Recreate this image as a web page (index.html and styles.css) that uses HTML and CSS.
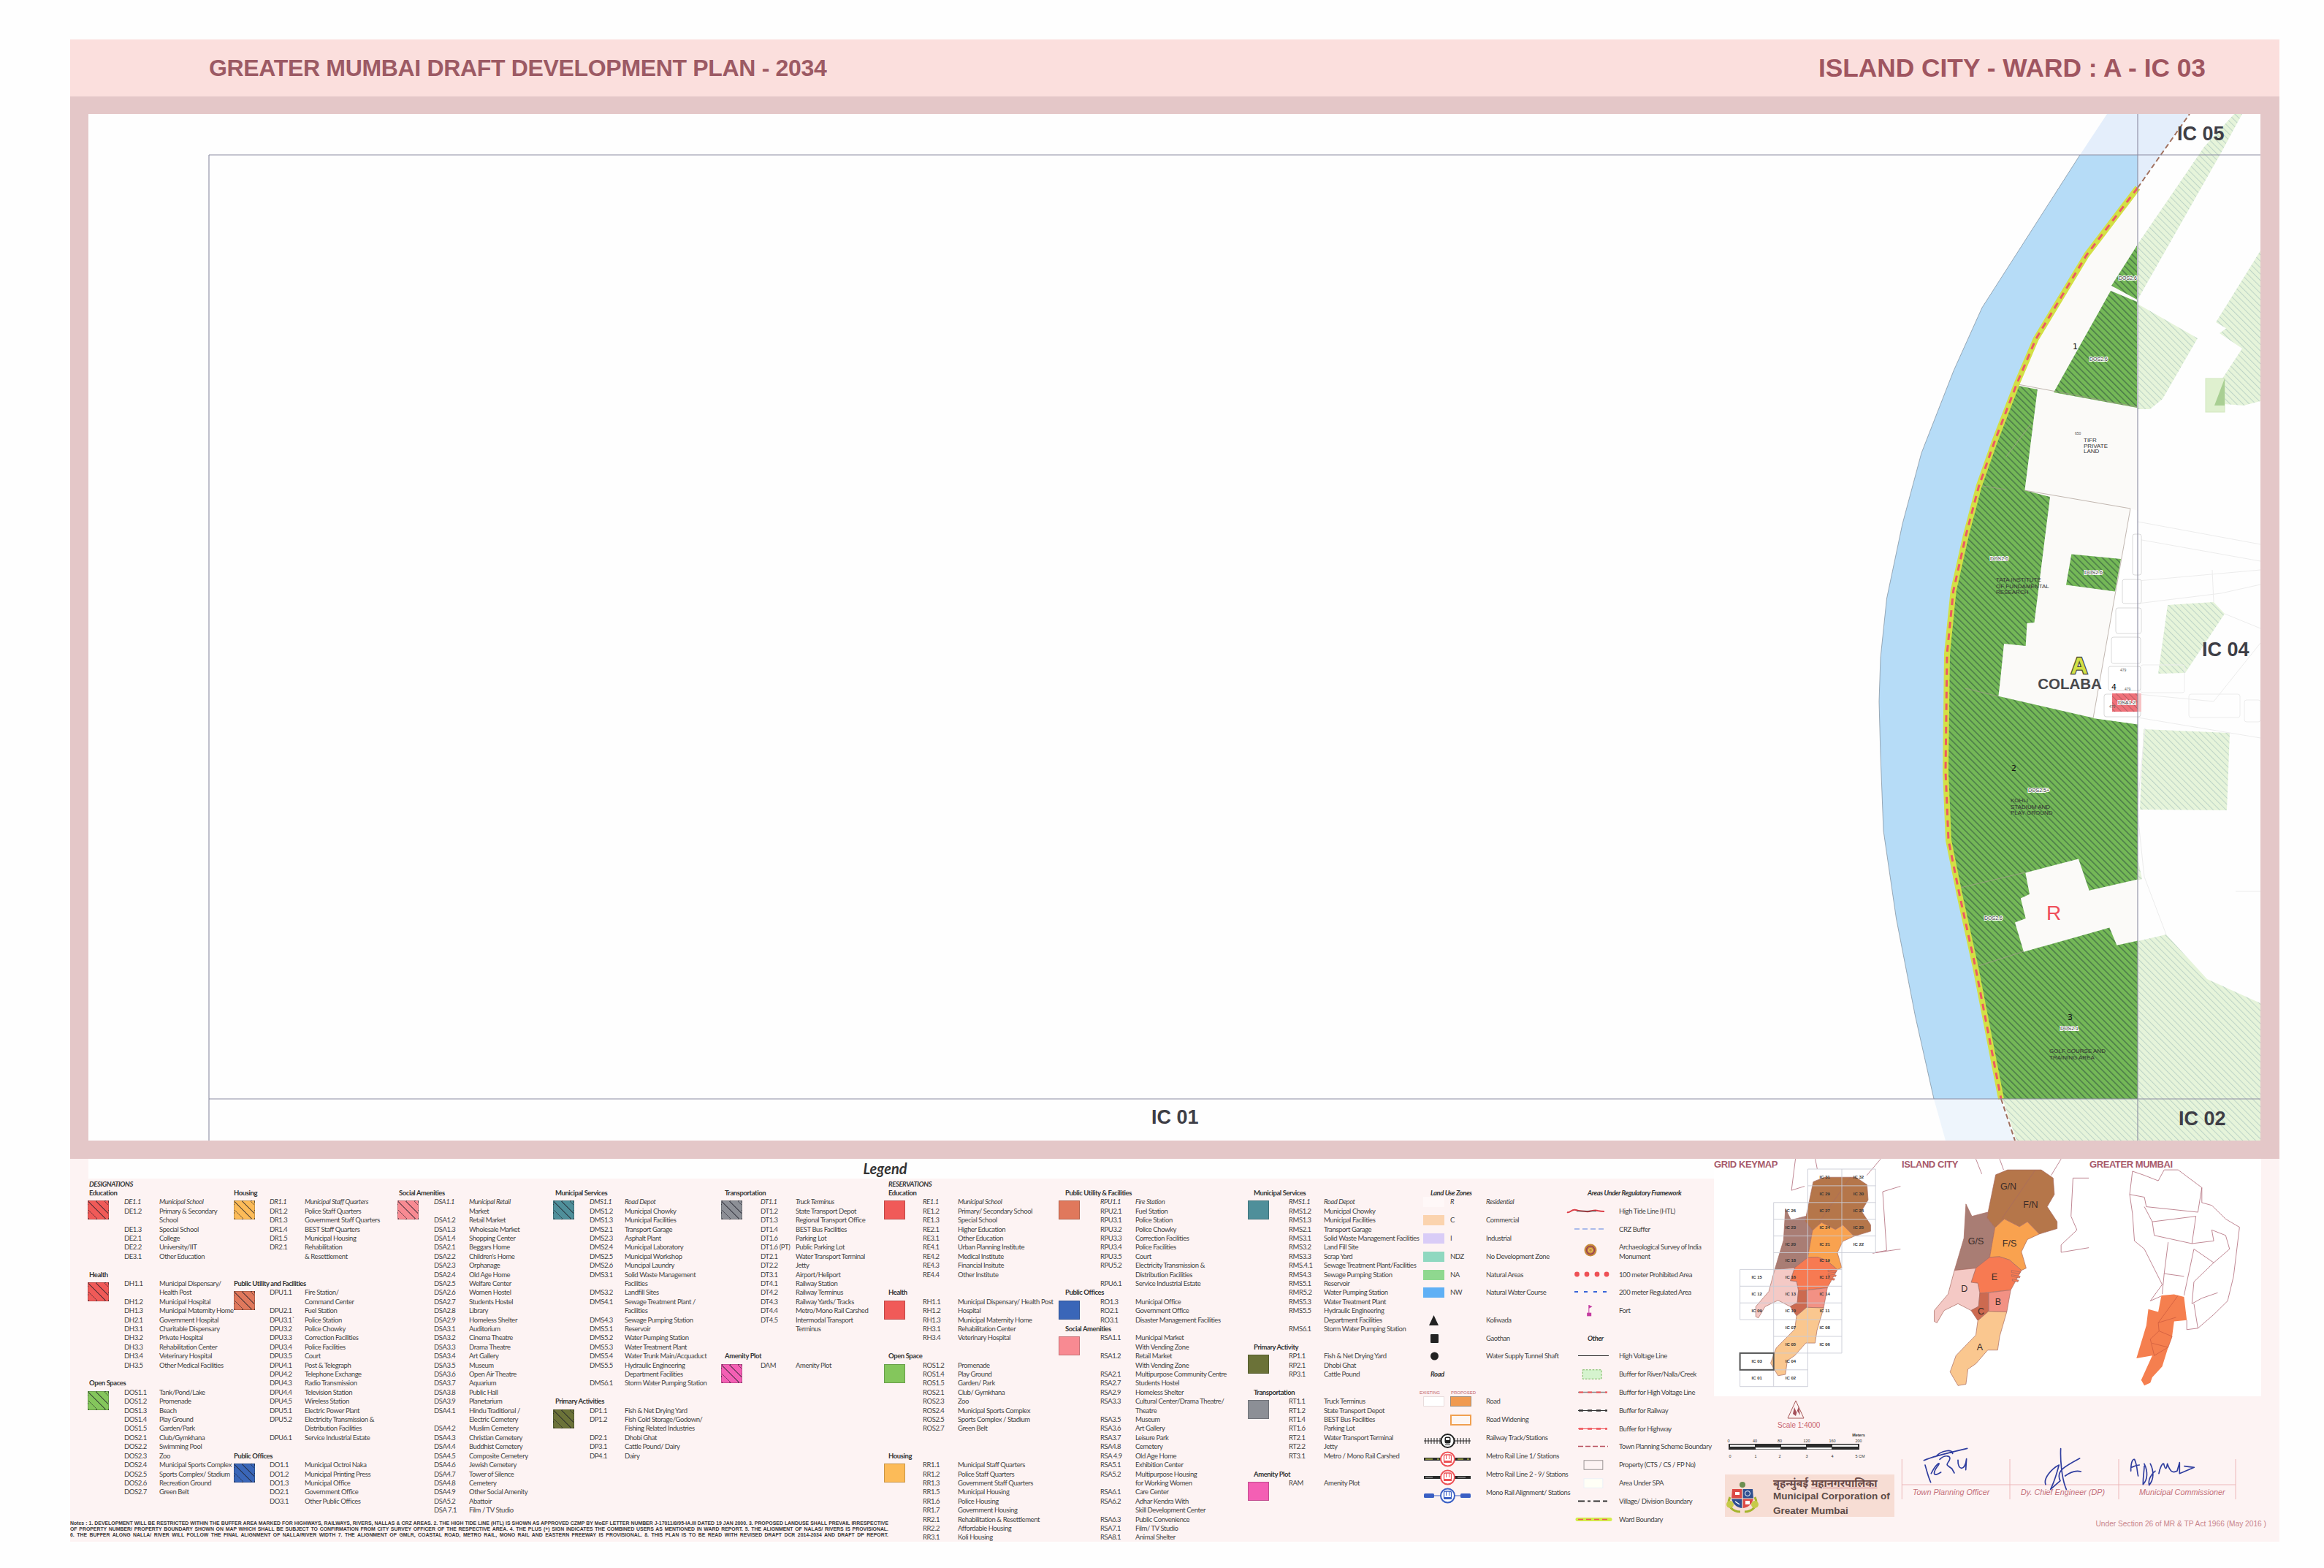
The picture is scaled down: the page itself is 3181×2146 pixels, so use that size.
FILE: index.html
```html
<!DOCTYPE html>
<html lang="en">
<head>
<meta charset="utf-8">
<title>Greater Mumbai Draft Development Plan - 2034</title>
<link rel="stylesheet" href="styles.css">
</head>
<body>
<main class="sheet">
  <header class="head">
    <h1 class="h-left">GREATER MUMBAI DRAFT DEVELOPMENT PLAN - 2034</h1>
    <h2 class="h-right">ISLAND CITY - WARD : A - IC 03</h2>
  </header>

  <section class="frame">
    <svg class="map" viewBox="121 156 2973 1405" width="2973" height="1405">
      <defs>
        <pattern id="hg" width="6.2" height="6.2" patternUnits="userSpaceOnUse" patternTransform="rotate(-45)">
          <rect width="6.2" height="6.2" fill="#74b857"/><rect width="1.5" height="6.2" fill="#4b7a49"/>
        </pattern>
        <pattern id="hp" width="6.2" height="6.2" patternUnits="userSpaceOnUse" patternTransform="rotate(-45)">
          <rect width="6.2" height="6.2" fill="#e6f4da"/><rect width="1" height="6.2" fill="#bcd3c6"/>
        </pattern>
        <pattern id="hr" width="6.2" height="6.2" patternUnits="userSpaceOnUse" patternTransform="rotate(-45)">
          <rect width="6.2" height="6.2" fill="#f0727a"/><rect width="1" height="6.2" fill="#b55c62"/>
        </pattern>
      </defs>
      <rect x="121" y="156" width="2973" height="1405" fill="#fefefe"/>

      <polygon class="pale" points="2884,156 2847,212 2926,212 2926,257 2997,156"/>
      <polygon class="pale2" points="2647,1504 2663,1561 2758,1561 2739,1504"/>
      <path class="water" d="M2847,212 L2926,212 L2926,257 L2856,349 L2786.6,464 L2760.6,525 L2730,604.5 L2708.5,665.7 L2691,732 L2673.7,808.6 L2665,895 L2663,1056 L2667,1150 L2682.4,1226 L2704,1324 L2739,1504 L2647,1504 L2621.6,1391 L2595.5,1257 L2578,1137 L2574,1034 L2572,960 L2574,900 L2582.5,819 L2604,717 L2630,620 L2674,507.5 L2713,421 Z"/>
      <polygon class="land" points="2926,257 2856,349 2786.6,464 2760.6,525 2730,604.5 2708.5,665.7 2691,732 2673.7,808.6 2665,895 2663,1056 2667,1150 2682.4,1226 2704,1324 2739,1504 2926,1504"/>

      <g class="hpale">
        <polygon points="3058,156 3069,156 3038.5,212 2926,410 2926,334 3017,201"/>
        <polygon points="2926,416 3008,463 2960,546 2943,560 2926,560"/>
        <polygon points="3094,343 3033,441 3094,477"/>
        <polygon points="3038,456 3069,477 3032,533 3045,553 3071,555 3094,549 3094,470 3060,440"/>
        <polygon points="2967,828 3030,824 3045,840 2991,921 2954,922"/>
        <polygon points="2934,998 3052,1003 3048,1109 2929,1108"/>
        <polygon points="2926,1288 2965,1279 3021,1340 3094,1373 3094,1561 2760,1561 2741,1504 2926,1504"/>
        <polygon points="2926,1175 2932,1203 2926,1205"/>
      </g>
      <rect x="3019" y="518" width="26" height="46" fill="#dff0cf" stroke="#d2e7bf"/>
      <polygon points="3045,518 3045,555 3031,555" fill="#a9cf93"/>

      <g class="faint">
        <path d="M2926,714 L3094,745 M2926,738 L3094,768 M2926,795 L3094,780 M2926,826 L3040,812 L3094,800 M3030,824 L3028,780 M3045,840 L3094,860 M3094,880 L3030,960 L2926,950 M2926,982 L3094,1010 M2936,996 L2926,1100 M2926,1115 L2935,1200 L2965,1279"/>
        <rect x="2930" y="910" width="60" height="38" rx="3"/>
        <rect x="2996" y="950" width="70" height="32" rx="3"/>
        <rect x="3072" y="958" width="22" height="30" rx="3"/>
        <path d="M3060,1220 H3094"/>
      </g>

      <polygon class="hgreen" points="2762.8,528 2788.8,533 2771.4,671 2806,680 2784.5,852 2774.5,853 2772.7,884 2743,881 2738,930 2735.4,952.7 2864.8,982.6 2926,991.5 2926,1203.6 2859.6,1218.8 2845,1175.4 2772.3,1194.6 2778,1223.7 2765.8,1229.5 2772.7,1257 2758,1262.5 2770,1302.7 2887.4,1269.6 2897.4,1293.7 2926,1287.5 2926,1504 2739,1504 2704,1324 2682.4,1226 2667,1150 2663,1056 2665,895 2673.7,808.6 2691,732 2708.5,665.7 2730,604.5 2760.6,525"/>
      <polygon class="hgreen" points="2925,336 2890,391 2925,410"/>
      <polygon class="hgreen" points="2889,398 2925,413 2925,558 2811,537"/>
      <polygon class="hgreen" points="2835.3,758.6 2903,765 2895,809.6 2828,800.4"/>

      <polygon class="white" points="2916,696 2926,699 2926,991 2865,983"/>
      <g class="plot">
        <rect x="2919" y="731" width="12" height="56" rx="3"/>
        <rect x="2905" y="793" width="26" height="33" rx="3"/>
        <rect x="2896" y="832" width="35" height="35" rx="3"/>
        <rect x="2890" y="872" width="40" height="36" rx="3"/>
        <rect x="2886" y="912" width="44" height="33" rx="3"/>
        <rect x="2880" y="950" width="50" height="31" rx="3"/>
      </g>
      <path class="thin" d="M2762,526 L2926,557 M2771,671 L2916,696 M2916,696 L2865,983 M2690,942 L2735,953 M2683,1215 L2772,1194 M2708,1322 L2770,1302 M2746,625 L2780,580 M2713,665 L2746,670"/>
      <rect x="2891" y="949" width="35" height="25" fill="url(#hr)"/>
      <rect x="2926" y="949" width="5" height="25" fill="#f7c2c4"/>

      <path class="band" d="M2926,257 L2856,349 L2786.6,464 L2760.6,525 L2730,604.5 L2708.5,665.7 L2691,732 L2673.7,808.6 L2665,895 L2663,1056 L2667,1150 L2682.4,1226 L2704,1324 L2739,1504"/>
      <path class="banddash" d="M2926,257 L2856,349 L2786.6,464 L2760.6,525 L2730,604.5 L2708.5,665.7 L2691,732 L2673.7,808.6 L2665,895 L2663,1056 L2667,1150 L2682.4,1226 L2704,1324 L2739,1504"/>
      <path class="bandfade" d="M2926,257 L2997,156 M2739,1504 L2758,1561"/>
      <path class="shore" d="M2847,212 L2713,421 L2674,507.5 L2630,620 L2604,717 L2582.5,819 L2574,900 L2572,960 L2574,1034 L2578,1137 L2595.5,1257 L2621.6,1391 L2647,1504"/>

      <path class="grid" d="M286,212 H3094 M286,212 V1561 M286,1504 H3094 M2926,156 V1561"/>

      <g class="lbl-ic">
        <text x="2980" y="192">IC 05</text>
        <text x="3014" y="898">IC 04</text>
        <text x="2982" y="1540">IC 02</text>
        <text x="1576" y="1538">IC 01</text>
      </g>
      <text class="ward-a" x="2846" y="922">A</text>
      <text class="colaba" x="2833" y="943">COLABA</text>
      <text class="zone-r" x="2811" y="1259">R</text>
      <g class="lbl-blk">
        <text x="2852" y="605">TIFR</text><text x="2852" y="613">PRIVATE</text><text x="2852" y="620">LAND</text>
        <text x="2732" y="796">TATA INSTITUTE</text><text x="2732" y="805">OF FUNDAMENTAL</text><text x="2732" y="813">RESEARCH</text>
        <text x="2752" y="1098">KOHLI</text><text x="2752" y="1107">STADIUM AND</text><text x="2752" y="1115">PLAY GROUND</text>
        <text x="2805" y="1441">GOLF COURSE AND</text><text x="2805" y="1450">TRAINING AREA</text>
      </g>
      <g class="lbl-code">
        <text x="2900" y="383">DOS2.6</text>
        <text x="2860" y="494">DOS2.6</text>
        <text x="2724" y="767">DOS2.6</text>
        <text x="2853" y="786">DOS2.6</text>
        <text x="2776" y="1084">DOS2.5+</text>
        <text x="2716" y="1259">DOS2.6</text>
        <text x="2820" y="1410">DOS2.1</text>
        <text x="2899" y="964">DSA1.2</text>
      </g>
      <g class="lbl-num">
        <text x="2837" y="478">1</text>
        <text x="2753" y="1055">2</text>
        <text x="2830" y="1396">3</text>
        <text x="2890" y="944">4</text>
      </g>
      <g class="lbl-plot">
        <text x="2908" y="945">479</text><text x="2887" y="969">479</text><text x="2902" y="919">479</text><text x="2840" y="595">650</text>
      </g>
    </svg>
  </section>

  <section class="lower">
    <div class="legend">
      <div class="legend-head">Legend</div>
      <div class="legend-body">
        <div class="left-block">
          <div class="cols">
            <div class="col c1">
              <div class="cap">DESIGNATIONS</div>
              <div class="tt">Education</div>
              <div class="g first"><i class="sw st-red h"></i>
                <b>DE1.1</b><span>Municipal School</span><b>DE1.2</b><span>Primary &amp; Secondary</span><b></b><span>School</span><b>DE1.3</b><span>Special School</span><b>DE2.1</b><span>College</span><b>DE2.2</b><span>University/IIT</span><b>DE3.1</b><span>Other Education</span></div>
              <div class="tt m1">Health</div>
              <div class="g"><i class="sw st-red h"></i>
                <b>DH1.1</b><span>Municipal Dispensary/</span><b></b><span>Health Post</span><b>DH1.2</b><span>Municipal Hospital</span><b>DH1.3</b><span>Municipal Maternity Home</span><b>DH2.1</b><span>Government Hospital</span><b>DH3.1</b><span>Charitable Dispensary</span><b>DH3.2</b><span>Private Hospital</span><b>DH3.3</b><span>Rehabilitation Center</span><b>DH3.4</b><span>Veterinary Hospital</span><b>DH3.5</b><span>Other Medical Facilities</span></div>
              <div class="tt m1">Open Spaces</div>
              <div class="g"><i class="sw st-green h"></i>
                <b>DOS1.1</b><span>Tank/Pond/Lake</span><b>DOS1.2</b><span>Promenade</span><b>DOS1.3</b><span>Beach</span><b>DOS1.4</b><span>Play Ground</span><b>DOS1.5</b><span>Garden/Park</span><b>DOS2.1</b><span>Club/Gymkhana</span><b>DOS2.2</b><span>Swimming Pool</span><b>DOS2.3</b><span>Zoo</span><b>DOS2.4</b><span>Municipal Sports Complex</span><b>DOS2.5</b><span>Sports Complex/ Stadium</span><b>DOS2.6</b><span>Recreation Ground</span><b>DOS2.7</b><span>Green Belt</span></div>
            </div>
            <div class="col c2">
              <div class="cap"></div>
              <div class="tt">Housing</div>
              <div class="g first"><i class="sw st-yel h"></i>
                <b>DR1.1</b><span>Municipal Staff Quarters</span><b>DR1.2</b><span>Police Staff Quarters</span><b>DR1.3</b><span>Government Staff Quarters</span><b>DR1.4</b><span>BEST Staff Quarters</span><b>DR1.5</b><span>Municipal Housing</span><b>DR2.1</b><span>Rehabilitation</span><b></b><span>&amp; Resettlement</span></div>
              <div class="tt m2">Public Utility and Facilities</div>
              <div class="g"><i class="sw st-terra h"></i>
                <b>DPU1.1</b><span>Fire Station/</span><b></b><span>Command Center</span><b>DPU2.1</b><span>Fuel Station</span><b>DPU3.1`</b><span>Police Station</span><b>DPU3.2</b><span>Police Chowky</span><b>DPU3.3</b><span>Correction Facilities</span><b>DPU3.4</b><span>Police Facilities</span><b>DPU3.5</b><span>Court</span><b>DPU4.1</b><span>Post &amp; Telegraph</span><b>DPU4.2</b><span>Telephone Exchange</span><b>DPU4.3</b><span>Radio Transmission</span><b>DPU4.4</b><span>Television Station</span><b>DPU4.5</b><span>Wireless Station</span><b>DPU5.1</b><span>Electric Power Plant</span><b>DPU5.2</b><span>Electricity Transmission &amp;</span><b></b><span>Distribution Facilities</span><b>DPU6.1</b><span>Service Industrial Estate</span></div>
              <div class="tt m1">Public Offices</div>
              <div class="g"><i class="sw st-blue h"></i>
                <b>DO1.1</b><span>Municipal Octroi Naka</span><b>DO1.2</b><span>Municipal Printing Press</span><b>DO1.3</b><span>Municipal Office</span><b>DO2.1</b><span>Government Office</span><b>DO3.1</b><span>Other Public Offices</span></div>
            </div>
            <div class="col c3">
              <div class="cap"></div>
              <div class="tt">Social Amenities</div>
              <div class="g first"><i class="sw st-pink h"></i>
                <b>DSA1.1</b><span>Municipal Retail</span><b></b><span>Market</span><b>DSA1.2</b><span>Retail Market</span><b>DSA1.3</b><span>Wholesale Market</span><b>DSA1.4</b><span>Shopping Center</span><b>DSA2.1</b><span>Beggars Home</span><b>DSA2.2</b><span>Children's Home</span><b>DSA2.3</b><span>Orphanage</span><b>DSA2.4</b><span>Old Age Home</span><b>DSA2.5</b><span>Welfare Center</span><b>DSA2.6</b><span>Women Hostel</span><b>DSA2.7</b><span>Students Hostel</span><b>DSA2.8</b><span>Library</span><b>DSA2.9</b><span>Homeless Shelter</span><b>DSA3.1</b><span>Auditorium</span><b>DSA3.2</b><span>Cinema Theatre</span><b>DSA3.3</b><span>Drama Theatre</span><b>DSA3.4</b><span>Art Gallery</span><b>DSA3.5</b><span>Museum</span><b>DSA3.6</b><span>Open Air Theatre</span><b>DSA3.7</b><span>Aquarium</span><b>DSA3.8</b><span>Public Hall</span><b>DSA3.9</b><span>Planetarium</span><b>DSA4.1</b><span>Hindu Traditional /</span><b></b><span>Electric Cemetery</span><b>DSA4.2</b><span>Muslim Cemetery</span><b>DSA4.3</b><span>Christian Cemetery</span><b>DSA4.4</b><span>Buddhist Cemetery</span><b>DSA4.5</b><span>Composite Cemetery</span><b>DSA4.6</b><span>Jewish Cemetery</span><b>DSA4.7</b><span>Tower of Silence</span><b>DSA4.8</b><span>Cemetery</span><b>DSA4.9</b><span>Other Social Amenity</span><b>DSA5.2</b><span>Abattoir</span><b>DSA 7.1</b><span>Film / TV Studio</span></div>
            </div>
            <div class="col c4">
              <div class="cap"></div>
              <div class="tt">Municipal Services</div>
              <div class="g first"><i class="sw st-teal h"></i>
                <b>DMS1.1</b><span>Road Depot</span><b>DMS1.2</b><span>Municipal Chowky</span><b>DMS1.3</b><span>Municipal Facilities</span><b>DMS2.1</b><span>Transport Garage</span><b>DMS2.3</b><span>Asphalt Plant</span><b>DMS2.4</b><span>Municipal Laboratory</span><b>DMS2.5</b><span>Municipal Workshop</span><b>DMS2.6</b><span>Muncipal Laundry</span><b>DMS3.1</b><span>Solid Waste Management</span><b></b><span>Facilities</span><b>DMS3.2</b><span>Landfill Sites</span><b>DMS4.1</b><span>Sewage Treatment Plant /</span><b></b><span>Facilities</span><b>DMS4.3</b><span>Sewage Pumping Station</span><b>DMS5.1</b><span>Reservoir</span><b>DMS5.2</b><span>Water Pumping Station</span><b>DMS5.3</b><span>Water Treatment Plant</span><b>DMS5.4</b><span>Water Trunk Main/Acquaduct</span><b>DMS5.5</b><span>Hydraulic Engineering</span><b></b><span>Department Facilities</span><b>DMS6.1</b><span>Storm Water Pumping Station</span></div>
              <div class="tt m1">Primary Activities</div>
              <div class="g"><i class="sw st-olive h"></i>
                <b>DP1.1</b><span>Fish &amp; Net Drying Yard</span><b>DP1.2</b><span>Fish Cold Storage/Godown/</span><b></b><span>Fishing Related Industries</span><b>DP2.1</b><span>Dhobi Ghat</span><b>DP3.1</b><span>Cattle Pound/ Dairy</span><b>DP4.1</b><span>Dairy</span></div>
            </div>
            <div class="col c5">
              <div class="cap"></div>
              <div class="tt">Transportation</div>
              <div class="g first"><i class="sw st-gray h"></i>
                <b>DT1.1</b><span>Truck Terminus</span><b>DT1.2</b><span>State Transport Depot</span><b>DT1.3</b><span>Regional Transport Office</span><b>DT1.4</b><span>BEST Bus Facilities</span><b>DT1.6</b><span>Parking Lot</span><b>DT1.6 (PT)</b><span>Public Parking Lot</span><b>DT2.1</b><span>Water Transport Terminal</span><b>DT2.2</b><span>Jetty</span><b>DT3.1</b><span>Airport/Heliport</span><b>DT4.1</b><span>Railway Station</span><b>DT4.2</b><span>Railway Terminus</span><b>DT4.3</b><span>Railway Yards/ Tracks</span><b>DT4.4</b><span>Metro/Mono Rail Carshed</span><b>DT4.5</b><span>Intermodal Transport</span><b></b><span>Terminus</span></div>
              <div class="tt m2">Amenity Plot</div>
              <div class="g"><i class="sw st-mag h"></i><b>DAM</b><span>Amenity Plot</span></div>
            </div>
          </div>
          <p class="notes">
            <span>Notes : 1. DEVELOPMENT WILL BE RESTRICTED WITHIN THE BUFFER AREA MARKED FOR HIGHWAYS, RAILWAYS, RIVERS, NALLAS &amp; CRZ AREAS. 2. THE HIGH TIDE LINE (HTL) IS SHOWN AS APPROVED CZMP BY MoEF LETTER NUMBER J-17011/8/95-IA.III DATED 19 JAN 2000. 3. PROPOSED LANDUSE SHALL PREVAIL IRRESPECTIVE</span>
            <span>OF PROPERTY NUMBER/ PROPERTY BOUNDARY SHOWN ON MAP WHICH SHALL BE SUBJECT TO CONFIRMATION FROM CITY SURVEY OFFICER OF THE RESPECTIVE AREA. 4. THE PLUS (+) SIGN INDICATES THE COMBINED USERS AS MENTIONED IN WARD REPORT. 5. THE ALIGNMENT OF NALAS/ RIVERS IS PROVISIONAL.</span>
            <span>6. THE BUFFER ALONG NALLA/ RIVER WILL FOLLOW THE FINAL ALIGNMENT OF NALLA/RIVER WIDTH 7. THE ALIGNMENT OF GMLR, COASTAL ROAD, METRO RAIL, MONO RAIL AND EASTERN FREEWAY IS PROVISIONAL. 8. THIS PLAN IS TO BE READ WITH REVISED DRAFT DCR 2014-2034 AND DRAFT DP REPORT.</span>
          </p>
        </div>

        <div class="right-block">
          <div class="col c6">
            <div class="cap">RESERVATIONS</div>
            <div class="tt">Education</div>
            <div class="g first"><i class="sw st-red"></i>
              <b>RE1.1</b><span>Municipal School</span><b>RE1.2</b><span>Primary/ Secondary School</span><b>RE1.3</b><span>Special School</span><b>RE2.1</b><span>Higher Education</span><b>RE3.1</b><span>Other Education</span><b>RE4.1</b><span>Urban Planning Institute</span><b>RE4.2</b><span>Medical Institute</span><b>RE4.3</b><span>Financial Insitute</span><b>RE4.4</b><span>Other Institute</span></div>
            <div class="tt m1">Health</div>
            <div class="g"><i class="sw st-red"></i>
              <b>RH1.1</b><span>Municipal Dispensary/ Health Post</span><b>RH1.2</b><span>Hospital</span><b>RH1.3</b><span>Municipal Maternity Home</span><b>RH3.1</b><span>Rehabilitation Center</span><b>RH3.4</b><span>Veterinary Hospital</span></div>
            <div class="tt m1">Open Space</div>
            <div class="g"><i class="sw st-green"></i>
              <b>ROS1.2</b><span>Promenade</span><b>ROS1.4</b><span>Play Ground</span><b>ROS1.5</b><span>Garden/ Park</span><b>ROS2.1</b><span>Club/ Gymkhana</span><b>ROS2.3</b><span>Zoo</span><b>ROS2.4</b><span>Municipal Sports Complex</span><b>ROS2.5</b><span>Sports Complex / Stadium</span><b>ROS2.7</b><span>Green Belt</span></div>
            <div class="tt m2">Housing</div>
            <div class="g"><i class="sw st-yel"></i>
              <b>RR1.1</b><span>Municipal Staff Quarters</span><b>RR1.2</b><span>Police Staff Quarters</span><b>RR1.3</b><span>Government Staff Quarters</span><b>RR1.5</b><span>Municipal Housing</span><b>RR1.6</b><span>Police Housing</span><b>RR1.7</b><span>Government Housing</span><b>RR2.1</b><span>Rehabilitation &amp; Resettlement</span><b>RR2.2</b><span>Affordable Housing</span><b>RR3.1</b><span>Koli Housing</span></div>
          </div>
          <div class="col c7">
            <div class="cap"></div>
            <div class="tt">Public Utility &amp; Facilities</div>
            <div class="g first"><i class="sw st-terra"></i>
              <b>RPU1.1</b><span>Fire Station</span><b>RPU2.1</b><span>Fuel Station</span><b>RPU3.1</b><span>Police Station</span><b>RPU3.2</b><span>Police Chowky</span><b>RPU3.3</b><span>Correction Facilities</span><b>RPU3.4</b><span>Police Facilities</span><b>RPU3.5</b><span>Court</span><b>RPU5.2</b><span>Electricity Transmission &amp;</span><b></b><span>Distribution Facilities</span><b>RPU6.1</b><span>Service Industrial Estate</span></div>
            <div class="tt">Public Offices</div>
            <div class="g"><i class="sw st-blue"></i>
              <b>RO1.3</b><span>Municipal Office</span><b>RO2.1</b><span>Government Office</span><b>RO3.1</b><span>Disaster Management Facilities</span></div>
            <div class="tt">Social Amenities</div>
            <div class="g"><i class="sw st-pink"></i>
              <b>RSA1.1</b><span>Municipal Market</span><b></b><span>With Vending Zone</span><b>RSA1.2</b><span>Retail Market</span><b></b><span>With Vending Zone</span><b>RSA2.1</b><span>Multipurpose Community Centre</span><b>RSA2.7</b><span>Students Hostel</span><b>RSA2.9</b><span>Homeless Shelter</span><b>RSA3.3</b><span>Cultural Center/Drama Theatre/</span><b></b><span>Theatre</span><b>RSA3.5</b><span>Museum</span><b>RSA3.6</b><span>Art Gallery</span><b>RSA3.7</b><span>Leisure Park</span><b>RSA4.8</b><span>Cemetery</span><b>RSA 4.9</b><span>Old Age Home</span><b>RSA5.1</b><span>Exhibition Center</span><b>RSA5.2</b><span>Multipurpose Housing</span><b></b><span>for Working Women</span><b>RSA6.1</b><span>Care Center</span><b>RSA6.2</b><span>Adhar Kendra With</span><b></b><span>Skill Development Center</span><b>RSA6.3</b><span>Public Convenience</span><b>RSA7.1</b><span>Film/ TV Studio</span><b>RSA8.1</b><span>Animal Shelter</span></div>
          </div>
          <div class="col c8">
            <div class="cap"></div>
            <div class="tt">Municipal Services</div>
            <div class="g first"><i class="sw st-teal"></i>
              <b>RMS1.1</b><span>Road Depot</span><b>RMS1.2</b><span>Municipal Chowky</span><b>RMS1.3</b><span>Municipal Facilities</span><b>RMS2.1</b><span>Transport Garage</span><b>RMS3.1</b><span>Solid Waste Management Facilities</span><b>RMS3.2</b><span>Land Fill Site</span><b>RMS3.3</b><span>Scrap Yard</span><b>RMS.4.1</b><span>Sewage Treatment Plant/Facilities</span><b>RMS4.3</b><span>Sewage Pumping Station</span><b>RMS5.1</b><span>Reservoir</span><b>RMR5.2</b><span>Water Pumping Station</span><b>RMS5.3</b><span>Water Treatment Plant</span><b>RMS5.5</b><span>Hydraulic Engineering</span><b></b><span>Department Facilities</span><b>RMS6.1</b><span>Storm Water Pumping Station</span></div>
            <div class="tt m1">Primary Activity</div>
            <div class="g"><i class="sw st-olive"></i>
              <b>RP1.1</b><span>Fish &amp; Net Drying Yard</span><b>RP2.1</b><span>Dhobi Ghat</span><b>RP3.1</b><span>Cattle Pound</span></div>
            <div class="tt m1">Transportation</div>
            <div class="g"><i class="sw st-gray"></i>
              <b>RT1.1</b><span>Truck Terminus</span><b>RT1.2</b><span>State Transport Depot</span><b>RT1.4</b><span>BEST Bus Facilities</span><b>RT1.6</b><span>Parking Lot</span><b>RT2.1</b><span>Water Transport Terminal</span><b>RT2.2</b><span>Jetty</span><b>RT3.1</b><span>Metro / Mono Rail Carshed</span></div>
            <div class="tt m1">Amenity Plot</div>
            <div class="g"><i class="sw st-mag"></i><b>RAM</b><span>Amenity Plot</span></div>
          </div>
          <div class="col c9">
            <div class="cap"></div>
            <div class="tt it">Land Use Zones</div>
            <div class="z first"><i class="zs z-r"></i><b>R</b><span>Residential</span></div>
            <div class="z"><i class="zs z-c"></i><b>C</b><span>Commercial</span></div>
            <div class="z"><i class="zs z-i"></i><b>I</b><span>Industrial</span></div>
            <div class="z"><i class="zs z-ndz"></i><b>NDZ</b><span>No Development Zone</span></div>
            <div class="z"><i class="zs z-na"></i><b>NA</b><span>Natural Areas</span></div>
            <div class="z"><i class="zs z-nw"></i><b>NW</b><span>Natural Water Course</span></div>
            <div class="z m1">
              <svg class="zi" viewBox="0 0 37 16"><polygon points="8,15 21,15 14.5,1" fill="#222"/></svg><b></b><span>Koliwada</span></div>
            <div class="z">
              <svg class="zi" viewBox="0 0 37 16"><rect x="10" y="2" width="11" height="12" rx="1" fill="#222"/></svg><b></b><span>Gaothan</span></div>
            <div class="z">
              <svg class="zi" viewBox="0 0 37 16"><circle cx="15.5" cy="8" r="5.5" fill="#222"/></svg><b></b><span>Water Supply Tunnel Shaft</span></div>
            <div class="tt it">Road</div>
            <div class="subhead"><small>EXISTING</small><small>PROPOSED</small></div>
            <div class="z"><i class="zs z-ex"></i><i class="zs z-pr"></i><span>Road</span></div>
            <div class="z"><i></i><i class="zs z-wd"></i><span>Road Widening</span></div>
            <div class="z"><svg class="zt" viewBox="0 0 86 24"><use href="#ic-rail"/></svg><span>Railway Track/Stations</span></div>
            <div class="z"><svg class="zt" viewBox="0 0 86 24"><use href="#ic-metro1"/></svg><span>Metro Rail Line 1/ Stations</span></div>
            <div class="z"><svg class="zt" viewBox="0 0 86 24"><use href="#ic-metro2"/></svg><span>Metro Rail Line 2 - 9/ Stations</span></div>
            <div class="z"><svg class="zt" viewBox="0 0 86 24"><use href="#ic-mono"/></svg><span>Mono Rail Alignment/ Stations</span></div>
          </div>
          <div class="col c10">
            <div class="cap"></div>
            <div class="tt it">Areas Under Regulatory Framework</div>
            <div class="o m1"><svg viewBox="0 0 71 16"><path d="M0,9 C4,11 6,4 12,6 C17,8 20,7 26,8 C32,9 36,5 42,7 C46,8 48,8 51,8" fill="none" stroke="#dc4049" stroke-width="2"/><path d="M13,7.5 H40" stroke="#333" stroke-width="1"/></svg><span>High Tide Line (HTL)</span></div>
            <div class="o"><svg viewBox="0 0 71 16"><path d="M10,7 H51" stroke="#8fa8e8" stroke-width="1.6" stroke-dasharray="7 4"/></svg><span>CRZ Buffer</span></div>
            <div class="o l3"><svg viewBox="0 0 71 20"><circle cx="32" cy="10" r="8.5" fill="#c58a3a"/><circle cx="32" cy="10" r="5.5" fill="none" stroke="#9c3f58" stroke-width="1.5"/><circle cx="32" cy="10" r="2.5" fill="none" stroke="#e8c060" stroke-width="1.2"/></svg><span>Archaeological Survey of India<br>Monument</span></div>
            <div class="o"><svg viewBox="0 0 71 16"><g fill="#ee5055"><circle cx="13.5" cy="7" r="3.4"/><circle cx="27" cy="7" r="3.4"/><circle cx="41" cy="7" r="3.4"/><circle cx="54" cy="7" r="3.4"/></g></svg><span>100 meter Prohibited Area</span></div>
            <div class="o"><svg viewBox="0 0 71 16"><path d="M10,7 H54" stroke="#3a64d8" stroke-width="2.2" stroke-dasharray="5 8"/></svg><span>200 meter Regulated Area</span></div>
            <div class="o"><svg viewBox="0 0 71 24"><path d="M27,20 V0" stroke="#c43aa0" stroke-width="1.4"/><path d="M27,0 L34,3.5 L27,7 Z" fill="#c43aa0"/><rect x="23" y="16" width="9" height="7" fill="#c43aa0"/></svg><span>Fort</span></div>
            <div class="tt it m1">Other</div>
            <div class="o m1"><svg viewBox="0 0 71 16"><path d="M15,7.5 H57" stroke="#222" stroke-width="1"/></svg><span>High Voltage Line</span></div>
            <div class="o"><svg viewBox="0 0 71 18"><rect x="19.5" y="2" width="29" height="14" fill="#d5f3ce" stroke="#67b04a" stroke-dasharray="3 2"/></svg><span>Buffer for River/Nalla/Creek</span></div>
            <div class="o"><svg viewBox="0 0 71 16"><path d="M15,7.5 H55" stroke="#8a8a8a" stroke-width="1.4"/><path d="M16,7.5 H55" stroke="#ee5055" stroke-width="2" stroke-dasharray="6 6"/></svg><span>Buffer for High Voltage Line</span></div>
            <div class="o"><svg viewBox="0 0 71 16"><path d="M15,7.5 H55" stroke="#333" stroke-width="1.2"/><path d="M16,7.5 H55" stroke="#333" stroke-width="2.4" stroke-dasharray="6 6"/></svg><span>Buffer for Railway</span></div>
            <div class="o"><svg viewBox="0 0 71 16"><path d="M15,7.5 H55" stroke="#ee5055" stroke-width="1.2"/><path d="M16,7.5 H55" stroke="#ee5055" stroke-width="2.4" stroke-dasharray="6 6"/></svg><span>Buffer for Highway</span></div>
            <div class="o"><svg viewBox="0 0 71 16"><path d="M15,7.5 H56" stroke="#b8505e" stroke-width="1.4" stroke-dasharray="7 3"/></svg><span>Town Planning Scheme Boundary</span></div>
            <div class="o"><svg viewBox="0 0 71 18"><rect x="21.5" y="2" width="29" height="14" fill="none" stroke="#8e8888"/></svg><span>Property (CTS / CS / FP No)</span></div>
            <div class="o"><svg viewBox="0 0 71 18"><rect x="21.5" y="2" width="29" height="14" fill="#fffff6" stroke="#eaf0f8"/></svg><span>Area Under SPA</span></div>
            <div class="o"><svg viewBox="0 0 71 16"><path d="M15,7.5 H24 M28,7.5 H32 M36,7.5 H45 M49,7.5 H55" stroke="#333" stroke-width="1.8"/></svg><span>Village/ Division Boundary</span></div>
            <div class="o"><svg viewBox="0 0 71 16"><path d="M14,7.5 H59" stroke="#d4ec48" stroke-width="5" stroke-linecap="round"/><path d="M15,7.5 H58" stroke="#ee5a58" stroke-width="1.6" stroke-dasharray="7 4"/></svg><span>Ward Boundary</span></div>
          </div>
        </div>
      </div>
    </div>

    <aside class="key">
      <svg class="keymap" viewBox="2346 1586 749 325" width="749" height="325">
        <defs>
          <g id="wards">
            <path fill="#b5764a" d="M740,128 L770,110 L855,110 L885,140 L888,200 L870,245 L895,300 L895,325 L850,345 L820,300 L800,318 L762,290 L738,322 L718,285 Z"/>
            <path fill="#a97d74" d="M665,235 L680,280 L720,265 L718,285 L738,322 L725,430 L690,470 L636,478 L660,360 Z"/>
            <path fill="#f9a24f" d="M762,290 L800,318 L820,300 L850,345 L820,365 L805,410 L817,470 L805,478 L775,440 L750,428 L725,430 L738,322 Z"/>
            <path fill="#f77a52" d="M725,430 L750,428 L775,440 L805,478 L778,550 L700,562 L695,525 L678,522 L690,470 Z"/>
            <path fill="#f4c9c5" d="M636,478 L690,470 L678,522 L695,525 L700,562 L697,610 L678,625 L645,600 L610,625 L592,670 L585,665 L585,625 L620,565 Z"/>
            <path fill="#f29184" d="M722,560 L778,550 L768,630 L722,628 Z"/>
            <path fill="#cc6a50" d="M700,562 L722,560 L722,628 L695,662 L678,625 L697,610 Z"/>
            <path fill="#fac78f" d="M722,628 L768,630 L750,720 L745,770 L720,770 L690,820 L670,840 L665,895 L645,900 L625,850 L640,790 L690,715 L695,662 Z"/>
            <path fill="#f77a52" d="M780,478 L802,484 L800,490 L780,486 Z M780,494 L802,500 L800,506 L780,500 Z M782,510 L798,514 L796,520 L782,516 Z"/>
            <path fill="none" d="M840,110 L755,290"/>
          </g>
        </defs>
        <rect x="2346" y="1586" width="749" height="325" fill="#fff"/>
        <g class="km" transform="translate(2330,1560) scale(.5427,.3737)">
          <path class="ctx" d="M235,70 L225,185 L258,170 M285,70 L290,107 M450,70 L415,130 M500,170 L455,190 L465,405 L430,415 L500,400"/>
          <path class="ctx" d="M690,70 L705,125 M750,70 L760,110 M905,70 L880,130 M975,140 L935,140 L930,280 L945,330 L905,385 L905,412 L975,395"/>
          <use href="#wards"/>
          <g transform="translate(135,137) scale(.935,.92) translate(-585,-110)"><use href="#wards"/></g>
          <path class="ctx" d="M1085,115 L1115,130 L1150,150 L1165,110 L1200,110 L1260,175 L1260,230 L1285,240 L1320,290 L1355,320 L1340,500 L1325,590 L1290,640 L1250,690 L1222,695 L1222,660 M1085,115 L1078,200 L1085,270 L1090,370 L1115,400 L1160,530 L1130,590 L1158,572 M1078,200 L1115,210 L1120,245 L1250,265 L1260,175 M1115,245 L1135,300 L1245,280 L1235,380 L1140,350 L1135,300 M1175,375 L1165,490 L1160,565 M1235,380 L1290,370 L1285,330 L1320,350 L1330,400 L1290,450 L1240,400 L1215,570 M1165,490 L1215,500 M1290,450 L1240,520 L1235,600 L1260,580 L1300,560 M1240,600 L1250,690"/>
          <path fill="#f57f4f" d="M1158,570 L1190,566 L1215,575 L1222,660 L1190,665 L1185,720 L1175,760 L1160,830 L1135,870 L1130,890 L1115,900 L1107,880 L1135,790 L1095,800 L1120,680 L1125,620 L1150,630 Z"/>
          <path class="ctx2" d="M1200,570 L1150,670 L1152,700 L1130,730 L1140,790 M1150,670 L1195,650 M1152,700 L1185,720 L1175,760 L1135,745 M1175,760 L1140,790"/>
        </g>
        <path class="kgrid" d="M2474.4,1600 H2567.2 M2474.4,1622.9 H2567.2 M2427.7,1645.8 H2567.2 M2427.7,1668.7 H2567.2 M2427.7,1691.6 H2567.2 M2427.7,1714.5 H2567.2 M2381.6,1737.4 H2521 M2381.6,1760.3 H2521 M2381.6,1783.2 H2521 M2381.6,1806.1 H2521 M2427.7,1829 H2521 M2381.6,1851.9 H2521 M2381.6,1874.8 H2474.4 M2381.6,1897.7 H2474.4 M2381.6,1737.4 V1806.1 M2381.6,1851.9 V1897.7 M2427.7,1645.8 V1897.7 M2474.4,1600 V1897.7 M2521,1600 V1851.9 M2567.2,1600 V1714.5"/>
        <rect x="2381.6" y="1851.9" width="46.1" height="22.9" fill="none" stroke="#555" stroke-width="2"/>
        <g class="kl">
          <text x="2497.7" y="1613">IC 31</text><text x="2544" y="1613">IC 32</text>
          <text x="2497.7" y="1636">IC 29</text><text x="2544" y="1636">IC 30</text>
          <text x="2451" y="1659">IC 26</text><text x="2497.7" y="1659">IC 27</text><text x="2544" y="1659">IC 28</text>
          <text x="2451" y="1682">IC 23</text><text x="2497.7" y="1682">IC 24</text><text x="2544" y="1682">IC 25</text>
          <text x="2451" y="1705">IC 20</text><text x="2497.7" y="1705">IC 21</text><text x="2544" y="1705">IC 22</text>
          <text x="2451" y="1727">IC 18</text><text x="2497.7" y="1727">IC 19</text>
          <text x="2404.7" y="1750">IC 15</text><text x="2451" y="1750">IC 16</text><text x="2497.7" y="1750">IC 17</text>
          <text x="2404.7" y="1773">IC 12</text><text x="2451" y="1773">IC 13</text><text x="2497.7" y="1773">IC 14</text>
          <text x="2404.7" y="1796">IC 09</text><text x="2451" y="1796">IC 10</text><text x="2497.7" y="1796">IC 11</text>
          <text x="2451" y="1819">IC 07</text><text x="2497.7" y="1819">IC 08</text>
          <text x="2451" y="1842">IC 05</text><text x="2497.7" y="1842">IC 06</text>
          <text x="2404.7" y="1865">IC 03</text><text x="2451" y="1865">IC 04</text>
          <text x="2404.7" y="1888">IC 01</text><text x="2451" y="1888">IC 02</text>
        </g>
        <g class="wl">
          <text x="2749" y="1628">G/N</text><text x="2779.4" y="1653">F/N</text><text x="2704.5" y="1703">G/S</text><text x="2750.6" y="1706">F/S</text>
          <text x="2730" y="1752">E</text><text x="2688.8" y="1768">D</text><text x="2711.5" y="1799">C</text><text x="2735" y="1786">B</text><text x="2710" y="1848">A</text>
        </g>
        <g class="kt">
          <text x="2346" y="1598">GRID KEYMAP</text>
          <text x="2603" y="1598">ISLAND CITY</text>
          <text x="2860" y="1598">GREATER MUMBAI</text>
        </g>
      </svg>

      <div class="kfoot">
        <div class="kf-left">
          <svg class="scale" viewBox="0 0 257 107" width="257" height="107">
            <path d="M101,30 L112,6 L123,30 Z" fill="#fdf3f3" stroke="#a85a5a"/>
            <path d="M108,24 L110,15 L113,22 L116,14 L118,26 L114,20 L112,27 Z" fill="#a5505a"/>
            <text class="sc-t" x="87" y="43">Scale 1:4000</text>
            <rect x="20" y="65" width="179" height="8" fill="#2c2c2c"/>
            <g fill="#fff"><rect x="22" y="66.5" width="34" height="2.4"/><rect x="57" y="70.2" width="34" height="2.2"/><rect x="92" y="66.5" width="34" height="2.4"/><rect x="127" y="70.2" width="34" height="2.2"/><rect x="162" y="66.5" width="35" height="2.4"/></g>
            <g class="sc-n">
              <text x="20" y="63">0</text><text x="56" y="63">40</text><text x="90" y="63">80</text><text x="127" y="63">120</text><text x="162" y="63">160</text><text x="198" y="63">200</text>
              <text x="22" y="84">0</text><text x="57" y="84">1</text><text x="90" y="84">2</text><text x="127" y="84">3</text><text x="162" y="84">4</text><text x="200" y="84">5 CM</text>
              <text x="198" y="55" class="sc-b">Meters</text>
            </g>
          </svg>
          <div class="logo">
            <svg class="emblem" viewBox="0 0 46 45" width="46" height="45">
              <g fill="none" stroke="#a6b52e" stroke-width="3"><path d="M6,22 C0,34 10,42 20,42 M40,22 C46,34 36,42 26,42"/></g>
              <circle cx="6" cy="32" r="5" fill="#c6ca4a"/><circle cx="40" cy="32" r="5" fill="#c6ca4a"/>
              <circle cx="23" cy="5" r="4" fill="#6c8f50"/>
              <path d="M9,11 H23 V24 H8 Z" fill="#dc4a46"/><path d="M23,11 H37 L38,24 H23 Z" fill="#2f4f90"/>
              <path d="M8,24 H23 V37 C16,37 10,32 8,24 Z" fill="#2f4f90"/><path d="M23,24 H38 C36,32 30,37 23,37 Z" fill="#dc4a46"/>
              <path d="M23,11 V37 M8,24 H38" stroke="#f3e8d8" stroke-width="1.2"/>
              <circle cx="30" cy="17" r="3.5" fill="none" stroke="#fff"/><rect x="13" y="15" width="6" height="4" fill="#fff"/><rect x="27" y="27" width="6" height="5" fill="#fff"/><path d="M13,28 L19,32" stroke="#fff" stroke-width="1.5"/>
            </svg>
            <div class="logo-t">
              <div class="hi">बृहन्मुंबई <u>महानगरपालिका</u></div>
              <div class="en">Municipal Corporation of</div>
              <div class="en">Greater Mumbai</div>
            </div>
          </div>
        </div>
        <div class="kf-right">
          <svg class="sigs" viewBox="0 0 480 100" width="480" height="100">
            <path d="M3.3,27 V82 M151,27 V82 M300,27 V82 M460,27 V82 M3.3,62 H460" fill="none" stroke="#ebb2b3" stroke-width=".9"/>
            <g transform="scale(.3333)" fill="none" stroke="#2f3d9f" stroke-width="5" stroke-linecap="round" stroke-linejoin="round">
              <path d="M100,86 C130,72 200,55 278,37 M150,70 C170,45 220,38 218,58 M105,105 C112,130 118,155 128,176 M130,140 C150,100 170,90 160,105 C140,130 130,160 170,135 M165,82 C185,62 215,65 205,85 C195,105 185,100 215,120 L225,138 M240,85 C238,130 270,130 275,80 L272,125"/>
              <path d="M662,38 C660,80 665,160 685,205 M600,185 C590,160 625,120 655,105 C645,140 640,165 620,205 M620,205 L660,170 C640,130 680,110 740,78 M680,150 C700,135 720,125 745,132"/>
              <path d="M950,130 C950,100 955,80 965,82 C978,110 975,135 980,150 M952,115 C965,110 975,105 985,105 M1005,100 C1020,130 1020,165 1000,185 C1000,150 1005,130 1005,110 M1030,100 C1045,130 1045,165 1025,188 C1020,165 1035,140 1050,130 M1065,140 C1070,115 1080,95 1085,100 C1090,120 1095,130 1100,100 C1110,130 1120,140 1140,130 L1150,95 V140 L1210,115 L1170,110"/>
            </g>
            <g class="sig-t"><text x="18" y="76">Town Planning Officer</text><text x="166" y="76">Dy. Chief Engineer (DP)</text><text x="328" y="76">Municipal Commissioner</text></g>
          </svg>
          <div class="under">Under Section 26 of MR &amp; TP Act 1966 (May 2016 )</div>
        </div>
      </div>
    </aside>
  </section>
</main>

<svg class="sprites" width="0" height="0" aria-hidden="true">
  <defs>
    <g id="ic-rail">
      <path d="M1,12 H65" stroke="#222"/><path d="M3,8 V16 M7,8 V16 M11,8 V16 M15,8 V16 M19,8 V16 M23,8 V16 M43,8 V16 M47,8 V16 M51,8 V16 M55,8 V16 M59,8 V16 M63,8 V16" stroke="#222"/>
      <circle cx="33.500" cy="12" r="9" fill="#fff" stroke="#222" stroke-width="2"/>
      <rect x="29.500" y="6.500" width="8" height="9" rx="2" fill="#222"/><path d="M30,17.500 L37,17.500" stroke="#222"/><rect x="31" y="8" width="5" height="3" fill="#fff"/>
    </g>
    <g id="ic-metro1">
      <path d="M1,12 H65" stroke="#2a2a2a" stroke-width="4"/><path d="M3,12 H13 M19,12 H22 M47,12 H55 M60,12 H63" stroke="#d8e84a" stroke-width="1.2"/>
      <circle cx="33.500" cy="12" r="9.500" fill="#fff" stroke="#ee5055" stroke-width="2"/>
      <rect x="28.500" y="6" width="10" height="10" rx="2" fill="none" stroke="#ee5055" stroke-width="1.3"/><path d="M31.500,6 V12 M35.500,6 V12" stroke="#ee5055"/><rect x="28" y="14" width="11" height="3" fill="#ee5055"/>
    </g>
    <g id="ic-metro2">
      <path d="M1,12 H65" stroke="#2a2a2a" stroke-width="4"/><path d="M3,12 H13 M47,12 H58" stroke="#bbb" stroke-width="1"/>
      <circle cx="33.500" cy="12" r="9.500" fill="#fff" stroke="#ee5055" stroke-width="2"/>
      <rect x="28.500" y="6" width="10" height="10" rx="2" fill="none" stroke="#ee5055" stroke-width="1.3"/><path d="M31.500,6 V12 M35.500,6 V12" stroke="#ee5055"/><rect x="28" y="14" width="11" height="3" fill="#ee5055"/>
    </g>
    <g id="ic-mono">
      <path d="M14,12 H52" stroke="#3a5fc4"/><rect x="1" y="9" width="14" height="6" rx="1.500" fill="#3a5fc4"/><rect x="51" y="9" width="14" height="6" rx="1.500" fill="#3a5fc4"/>
      <circle cx="33.500" cy="12" r="9.500" fill="#fff" stroke="#3a5fc4" stroke-width="2"/>
      <rect x="28.500" y="6" width="10" height="10" rx="2" fill="none" stroke="#3a5fc4" stroke-width="1.3"/><path d="M31.500,6 V12 M35.500,6 V12" stroke="#3a5fc4"/><rect x="28" y="14" width="11" height="3" fill="#3a5fc4"/>
    </g>
  </defs>
</svg>
</body>
</html>
```
FILE: styles.css
```css
:root { --r: 12.42px; }
* { box-sizing: border-box; }
html, body { margin: 0; background: #fefefe; }
.sprites { position: absolute; }
.sheet { width: 3024px; margin: 54px 0 0 96px; font-family: "Liberation Sans", sans-serif; }

/* header */
.head { height: 78px; background: #fbdfdd; display: flex; justify-content: space-between; align-items: center; padding: 0 101px 0 190px; }
.h-left { margin: 0; font-size: 32px; font-weight: 700; color: #9c5a64; letter-spacing: -.33px; }
.h-right { margin: 0; font-size: 35.300px; font-weight: 700; color: #9f5560; }

/* map */
.frame { background: #e4c7c8; padding: 24px 25px 25px; }
.map { display: block; }
.pale { fill: #e4eefb; }
.pale2 { fill: #eef5fc; }
.water { fill: #b6dcf7; }
.land { fill: #fbfaf8; }
.white { fill: #fff; }
.hpale polygon { fill: url(#hp); }
.hgreen { fill: url(#hg); }
.faint { fill: none; stroke: #ececec; stroke-width: 1; }
.plot rect { fill: #fff; stroke: #d0d0d0; stroke-width: .8; }
.thin { fill: none; stroke: #a89a90; stroke-width: .7; }
.band { fill: none; stroke: #d3e045; stroke-width: 8; stroke-linejoin: round; }
.banddash { fill: none; stroke: #ec5a62; stroke-width: 3; stroke-dasharray: 9 7; }
.bandfade { fill: none; stroke: #a0705e; stroke-width: 2; stroke-dasharray: 7 4; }
.shore { fill: none; stroke: #7a8a98; stroke-width: .7; }
.grid { fill: none; stroke: #8b8ca2; stroke-width: 1.1; }
.lbl-ic text { font-size: 27px; font-weight: 700; fill: #3e3e46; }
.ward-a { font-size: 32px; font-weight: 700; fill: #d3e045; stroke: #44443c; stroke-width: 2.5; paint-order: stroke; text-anchor: middle; }
.colaba { font-size: 20.500px; font-weight: 700; fill: #48484c; text-anchor: middle; }
.zone-r { font-size: 28px; fill: #ef4f5a; text-anchor: middle; }
.lbl-blk text { font-size: 8px; fill: #333; }
.lbl-code text { font-size: 7px; fill: #333; stroke: #fff; stroke-width: 2px; paint-order: stroke; }
.lbl-num text { font-size: 11px; fill: #111; font-family: "DejaVu Sans", sans-serif; }
.lbl-plot text { font-size: 5px; fill: #555; }

/* lower band */
.lower { display: flex; height: 524px; background: #fdf3f3; }
.legend { width: 2250px; flex: none; }
.legend-head { margin-left: 25px; height: 27px; background: #fefefe; text-align: center; padding-right: 44px; font: italic 700 20px/27px "Lato", sans-serif; color: #333; }
.legend-body { display: flex; padding-top: 1.500px; font: 400 9.500px/var(--r) "Lato", sans-serif; letter-spacing: -.42px; color: #444; }
.left-block { width: 1114px; flex: none; }
.cols { display: flex; height: 466.500px; padding-left: 24px; }
.right-block { display: flex; }

.col { --sw: 50px; --tp: 2px; flex: none; }
.c1 { width: 200px; }
.c2 { width: 224px; --sw: 49px; --tp: 0px; }
.c3 { width: 213px; }
.c4 { width: 230px; --tp: 3px; }
.c5 { width: 223px; --sw: 54px; --tp: 5px; }
.c6 { width: 239px; --sw: 53px; --tp: 6px; }
.c7 { width: 259px; --sw: 57px; --tp: 9px; }
.c8 { width: 240px; --sw: 56px; --tp: 8px; }
.c9 { width: 197px; --tp: 10px; }
.c10 { width: 201px; --tp: 28px; }

.cap { height: var(--r); padding-left: var(--tp); font-weight: 700; font-style: italic; color: #333; }
.tt { height: var(--r); padding-left: var(--tp); font-weight: 700; color: #333; white-space: nowrap; }
.it { font-style: italic; }
.m1 { margin-top: var(--r); }
.m2 { margin-top: calc(2 * var(--r)); }

.g { display: grid; grid-template-columns: var(--sw) 48px max-content; grid-auto-rows: var(--r); white-space: nowrap; }
.g b { grid-column: 2; font-weight: 400; }
.g span { grid-column: 3; }
.first b:nth-of-type(1), .first span:nth-of-type(1) { font-style: italic; }

.sw { grid-column: 1; grid-row: 1 / span 2; width: 29px; height: 26px; margin-top: 4px; border: 1px solid rgba(0,0,0,.2); }
.h { background-image: repeating-linear-gradient(45deg, rgba(30,30,40,.55) 0 1px, transparent 1px 8px); }
.st-red { background-color: #f05a58; }
.st-yel { background-color: #fcbb58; }
.st-pink { background-color: #f88a92; }
.st-teal { background-color: #4f8f9a; }
.st-terra { background-color: #e0785c; }
.st-green { background-color: #84c65c; }
.st-blue { background-color: #3a66b8; }
.st-olive { background-color: #6b7238; }
.st-gray { background-color: #8c8f96; }
.st-mag { background-color: #f45fb4; }

.z { display: grid; grid-template-columns: 37px 49px 1fr; height: calc(2 * var(--r)); white-space: nowrap; }
.z b { font-weight: 400; }
.zs { display: block; width: 29px; height: 14px; margin-top: -1px; }
.z-r { background: #fff8f8; }
.z-c { background: #fbd3ae; }
.z-i { background: #d9ccf7; }
.z-ndz { background: #8fd8c0; }
.z-na { background: #8fd88f; }
.z-nw { background: #5fb0f5; }
.z-ex { background: #fff; border: 1px solid #e8dcdc; }
.z-pr { background: #f09a50; border: 1px solid #9a8a7a; }
.z-wd { background: #fdf6f3; border: 2px solid #f0a050; height: 15px; }
.zi { width: 37px; height: 16px; margin-top: -2px; display: block; }
.zt { grid-column: 1 / span 2; width: 86px; height: 24px; margin-top: -2px; display: block; overflow: visible; }
.subhead { height: var(--r); display: flex; gap: 16px; margin-left: -5px; margin-top: var(--r); }
.subhead small { font: 6px/var(--r) "Liberation Sans", sans-serif; letter-spacing: 0; color: #c0646c; width: 27px; white-space: nowrap; }

.o { display: grid; grid-template-columns: 71px 1fr; height: calc(2 * var(--r)); white-space: nowrap; }
.o svg { width: 71px; height: 16px; margin-top: -2px; display: block; overflow: visible; }
.l3 { height: calc(3 * var(--r)); }
.l3 svg { height: 20px; margin-top: 0; }

.notes { margin: 0 -6px 0 0; font: 700 6.900px/8.100px "Liberation Sans", sans-serif; letter-spacing: 0; color: #3a3a3a; }
.notes span { display: block; text-align: justify; text-align-last: justify; height: 8.100px; overflow: hidden; }

/* key */
.key { width: 774px; flex: none; }
.keymap { display: block; }
.km path, #wards path { vector-effect: non-scaling-stroke; }
.ctx { fill: none; stroke: #b06a78; stroke-width: .8; }
.ctx2 { fill: none; stroke: #c8583c; stroke-width: .7; }
#wards path { stroke: #a86a60; stroke-width: .7; }
.kgrid { fill: none; stroke: #c9ccd6; stroke-width: .9; }
.kl text { font-size: 6px; font-weight: 700; fill: #333; text-anchor: middle; }
.wl text { font-size: 12.500px; fill: #3a2c28; text-anchor: middle; }
.kt text { font-size: 13px; font-weight: 700; fill: #a85a6b; letter-spacing: -.43px; }

.kfoot { display: flex; }
.kf-left { width: 254px; flex: none; }
.scale { display: block; }
.sc-t { font-size: 10px; fill: #c8646f; }
.sc-n text { font-size: 5.500px; fill: #333; text-anchor: middle; }
.sc-n .sc-b { font-weight: 700; }
.logo { display: flex; width: 232px; height: 58px; margin-left: 15px; background: #f7ddd4; padding: 9px 0 0 1px; gap: 19px; }
.emblem { flex: none; }
.logo-t { margin-top: -7px; color: #5d4c48; }
.hi { font: 700 14.500px/18px "Noto Sans", "DejaVu Sans", sans-serif; color: #6a4a48; white-space: nowrap; }
.hi u { text-decoration-color: #d08088; }
.en { font-weight: 700; font-size: 13.500px; line-height: 20px; white-space: nowrap; }
.kf-right { padding-top: 59px; }
.sigs { display: block; overflow: visible; }
.sig-t text { font-size: 10.800px; font-style: italic; fill: #c4707a; }
.under { margin-top: 10px; width: 502px; text-align: right; font-size: 10.200px; color: #c8858c; white-space: nowrap; }
```
